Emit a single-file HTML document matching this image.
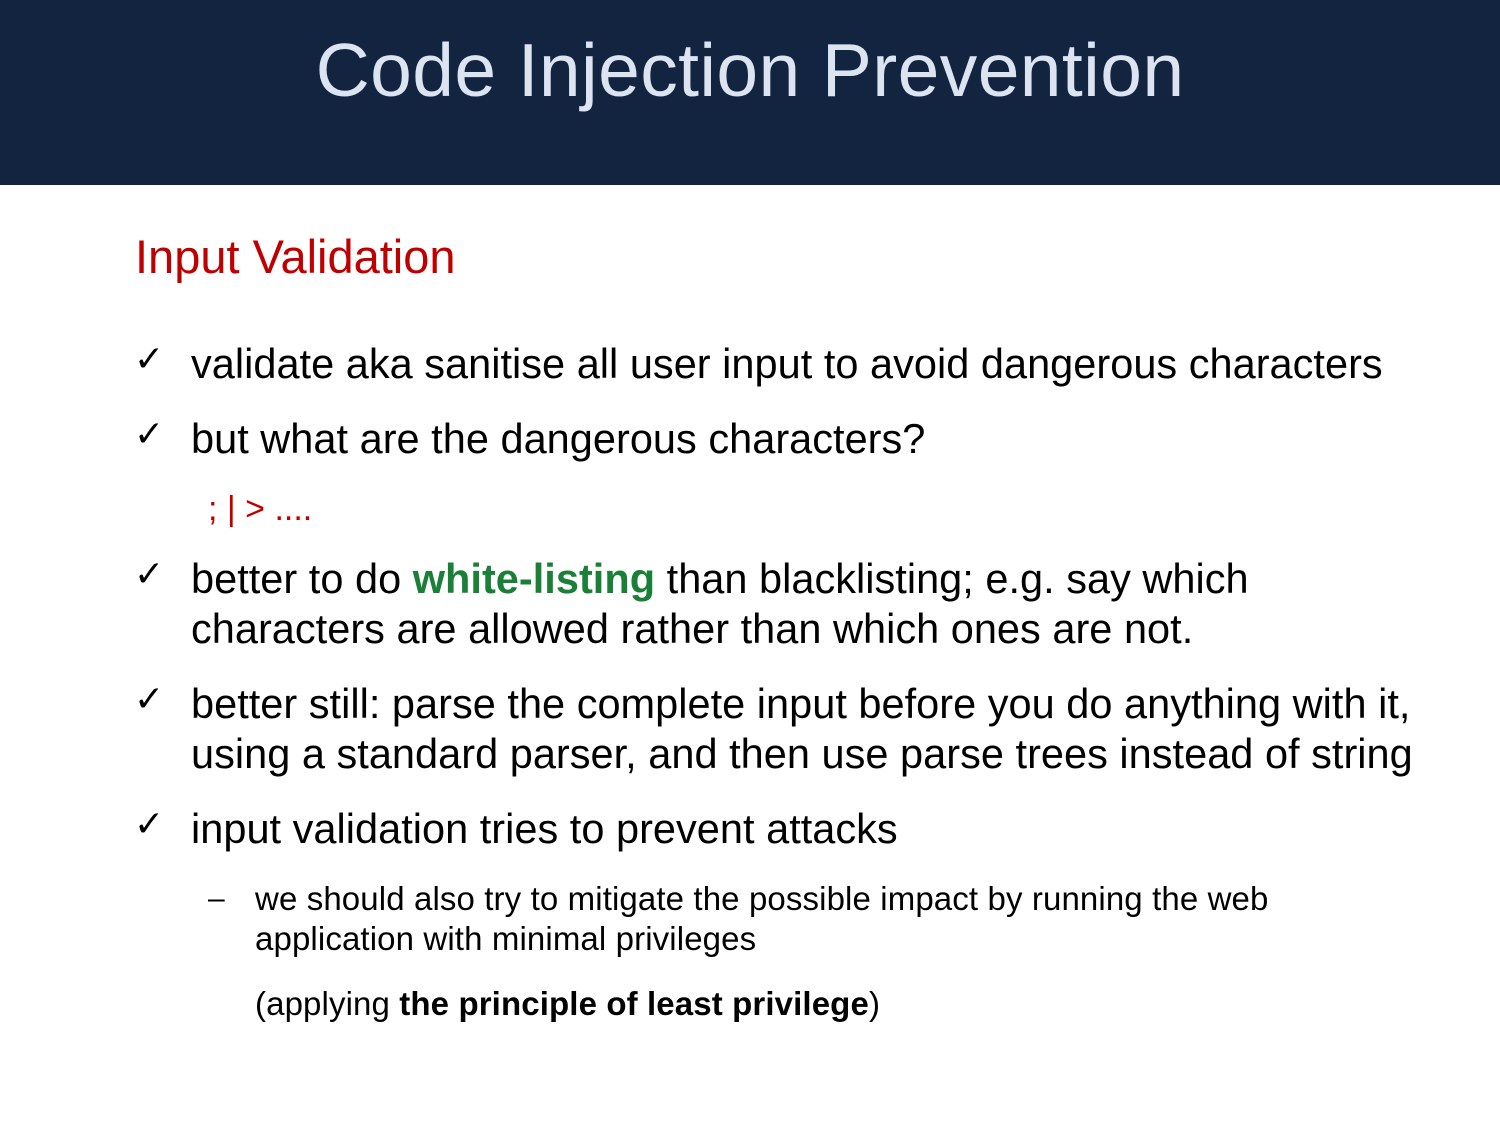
<!DOCTYPE html>
<html><head><meta charset="utf-8"><style>
body{margin:0;width:1500px;height:1125px;background:#fff;position:relative;overflow:hidden;font-family:"Liberation Sans",Arial,sans-serif;}
.hdr{position:absolute;left:0;top:0;width:1500px;height:185px;background:#12243f;}
.title{position:absolute;left:0;width:1500px;top:25px;text-align:center;color:#dbe4f0;font-size:75px;line-height:90px;letter-spacing:0.4px;}
.sub{position:absolute;left:135px;top:229px;color:#c00000;font-size:47px;line-height:56px;}
.l{position:absolute;white-space:nowrap;color:#000;}
.b{font-size:41.5px;line-height:44px;left:191px;letter-spacing:0.02px;}
.ck{position:absolute;left:134px;font-size:36px;line-height:44px;font-family:"DejaVu Sans",sans-serif;font-weight:bold;}
.s{font-size:33px;line-height:36px;left:255px;letter-spacing:0.12px;}
</style></head><body>
<div class="hdr"></div>
<div class="title">Code Injection Prevention</div>
<div class="sub">Input Validation</div>

<div class="ck" style="top:338px">✓</div>
<div class="l b" style="top:342px">validate aka sanitise all user input to avoid dangerous characters</div>
<div class="ck" style="top:413px">✓</div>
<div class="l b" style="top:417px">but what are the dangerous characters?</div>
<div class="l" style="left:208px;top:491px;font-size:34px;line-height:36px;color:#c00000">; | &gt; ....</div>
<div class="ck" style="top:553px">✓</div>
<div class="l b" style="top:557px">better to do <b style="color:#1a7f37">white-listing</b> than blacklisting; e.g. say which</div>
<div class="l b" style="top:607px">characters are allowed rather than which ones are not.</div>
<div class="ck" style="top:678px">✓</div>
<div class="l b" style="top:682px">better still: parse the complete input before you do anything with it,</div>
<div class="l b" style="top:732px">using a standard parser, and then use parse trees instead of string</div>
<div class="ck" style="top:803px">✓</div>
<div class="l b" style="top:807px">input validation tries to prevent attacks</div>
<div class="l" style="left:208px;top:881px;font-size:30px;line-height:36px">–</div>
<div class="l s" style="top:881px">we should also try to mitigate the possible impact by running the web</div>
<div class="l s" style="top:921px">application with minimal privileges</div>
<div class="l s" style="top:986px">(applying <b>the principle of least privilege</b>)</div>
</body></html>
